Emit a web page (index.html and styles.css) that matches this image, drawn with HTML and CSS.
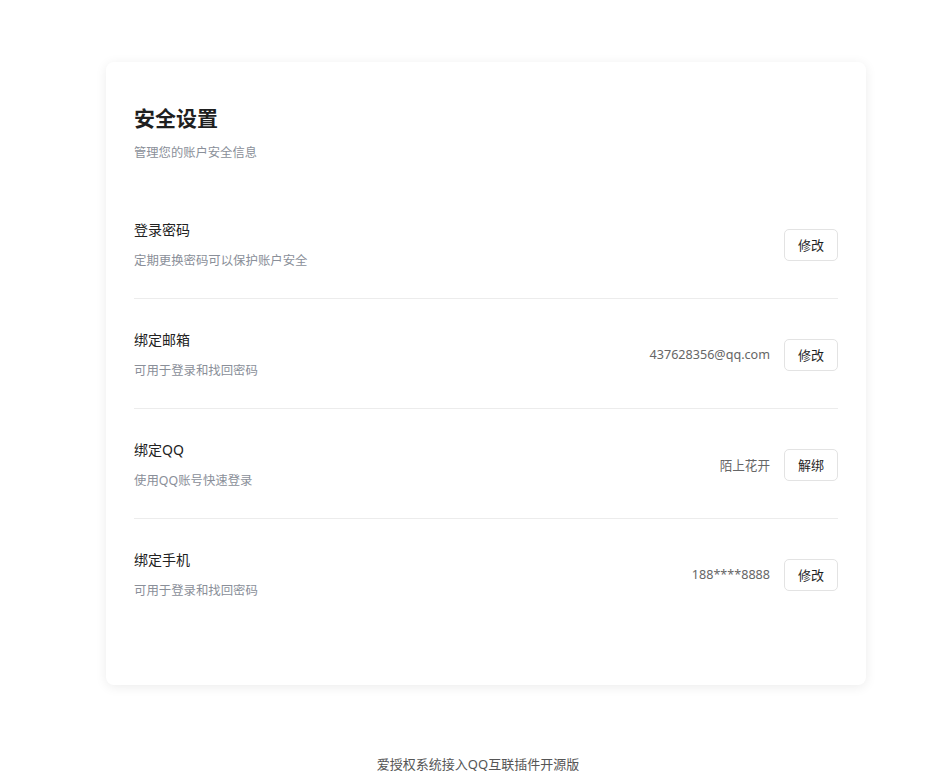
FILE: index.html
```html
<!DOCTYPE html>
<html lang="zh-CN">
<head>
  <meta charset="UTF-8">
  <title>安全设置</title>
  <meta name="viewport" content="width=device-width, initial-scale=1.0">
  <link rel="stylesheet" href="styles.css">
</head>
<body>
<div class="page">
  <div class="card">
    <div class="card-head">
      <h1>安全设置</h1>
      <p class="sub">管理您的账户安全信息</p>
    </div>
    <div class="item">
      <div class="item-info">
        <div class="item-title">登录密码</div>
        <div class="item-desc">定期更换密码可以保护账户安全</div>
      </div>
      <div class="item-action">
        <button type="button" class="btn">修改</button>
      </div>
    </div>
    <div class="item">
      <div class="item-info">
        <div class="item-title">绑定邮箱</div>
        <div class="item-desc">可用于登录和找回密码</div>
      </div>
      <div class="item-action">
        <span class="item-value">437628356@qq.com</span>
        <button type="button" class="btn">修改</button>
      </div>
    </div>
    <div class="item">
      <div class="item-info">
        <div class="item-title">绑定QQ</div>
        <div class="item-desc">使用QQ账号快速登录</div>
      </div>
      <div class="item-action">
        <span class="item-value">陌上花开</span>
        <button type="button" class="btn">解绑</button>
      </div>
    </div>
    <div class="item">
      <div class="item-info">
        <div class="item-title">绑定手机</div>
        <div class="item-desc">可用于登录和找回密码</div>
      </div>
      <div class="item-action">
        <span class="item-value">188****8888</span>
        <button type="button" class="btn">修改</button>
      </div>
    </div>
  </div>
  <div class="footer">爱授权系统接入QQ互联插件开源版</div>
</div>
</body>
</html>
```

FILE: styles.css
```css
* { box-sizing: border-box; }
body {
  margin: 0;
  background: #fff;
  font-family: "Noto Sans", "Noto Sans CJK SC", sans-serif;
  color: #222;
}
.page {
  padding: 62px 0 0 106px;
}
.card {
  width: 760px;
  background: #fff;
  border-radius: 8px;
  box-shadow: 0 2px 12px rgba(0,0,0,0.08);
  padding: 42px 28px 57px;
}
.card-head h1 {
  margin: 0;
  font-size: 21px;
  line-height: 28px;
  font-weight: bold;
  color: #1f1f1f;
}
.card-head .sub {
  margin: 12px 0 27px;
  font-size: 12.3px;
  line-height: 18px;
  color: #8a8f99;
}
.item {
  display: flex;
  justify-content: space-between;
  align-items: center;
  padding: 30px 0 28px;
  border-bottom: 1px solid #ececec;
}
.item:last-child {
  border-bottom: none;
}
.item-title {
  font-size: 14px;
  line-height: 22px;
  color: #222;
}
.item-desc {
  margin-top: 11px;
  font-size: 12.4px;
  line-height: 18px;
  color: #8a8f99;
}
.item-action {
  display: flex;
  align-items: center;
  gap: 14px;
}
.item-value {
  font-size: 12.6px;
  color: #666;
}
.btn {
  width: 54px;
  height: 32px;
  background: #fff;
  border: 1px solid #e3e3e3;
  border-radius: 5px;
  font-family: inherit;
  font-size: 13px;
  color: #1f1f1f;
  cursor: pointer;
}
.footer {
  margin: 70px 0 0 -92px;
  text-align: center;
  font-size: 13px;
  line-height: 18px;
  color: #555;
}
```
